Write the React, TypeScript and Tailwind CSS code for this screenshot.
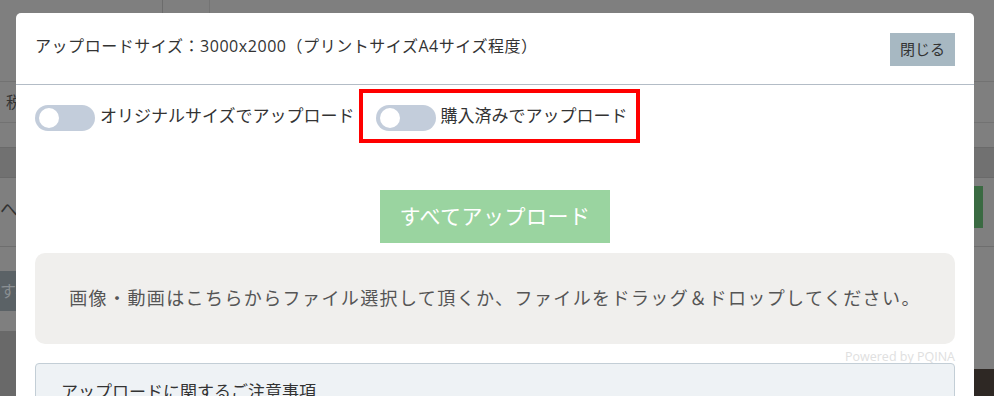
import React from "react";

function Toggle() {
  return (
    <span className="relative inline-block w-[60px] h-[26px] mt-[4px] rounded-full bg-[#c3cddb] shrink-0">
      <span className="absolute left-[4px] top-[3px] w-[20px] h-[20px] rounded-full bg-white" />
    </span>
  );
}

export default function App() {
  const font = { fontFamily: '"Open Sans", "Noto Sans CJK JP", sans-serif' };
  return (
    <div className="relative w-[994px] h-[396px] overflow-hidden bg-[#7f7f7f]" style={font}>
      {/* background page (dimmed) */}
      <div className="flex flex-col w-full h-full">
        <div className="flex h-[13px] shrink-0">
          <div className="w-[163px] border-r border-[#6c6c6c]" />
          <div className="w-[47px] border-r border-[#747474]" />
        </div>
        <div className="h-[69px] shrink-0 border-b border-[#727272]" />
        <div className="h-[41px] shrink-0 border-b border-[#727272] flex items-center pl-[6px] text-[16px] text-[#333]">税</div>
        <div className="h-[24px] shrink-0" />
        <div className="h-[31px] shrink-0 bg-[#717171] border-y border-[#6a6a6a]" />
        <div className="h-[69px] shrink-0 border-b border-[#6e6e6e] flex items-center justify-between">
          <span className="text-[18px] text-[#333] pb-[6px]">へ</span>
          <span className="w-[9px] h-[42px] mr-[11px] mb-[10px] bg-[#3a6a42]" />
        </div>
        <div className="h-[24px] shrink-0" />
        <div className="h-[40px] shrink-0 flex">
          <div className="w-[20px] bg-[#5b6266] text-[16px] text-[#8a8f92] leading-[40px] overflow-hidden whitespace-nowrap">すべ</div>
        </div>
        <div className="h-[20px] shrink-0" />
        <div className="flex-1 flex justify-between">
          <div className="w-[20px] bg-[#696969]" />
          <div className="w-[20px] mt-[38px] bg-[#2e2824]" />
        </div>
      </div>

      {/* modal */}
      <div className="absolute left-[16px] top-[13px] w-[958px] bg-white rounded-[5px] flex flex-col">
        <div className="flex items-center justify-between h-[72px] shrink-0 pl-[19px] pr-[19px] pt-[1px] border-b border-[#b3bcc6]">
          <span className="text-[16px] tracking-[0.55px] text-[#333] pb-[6px]">アップロードサイズ：3000x2000（プリントサイズA4サイズ程度）</span>
          <button className="w-[65px] h-[33px] bg-[#a7b8c2] text-[15px] text-[#333]">閉じる</button>
        </div>
        <div className="flex items-center pl-[19px] pt-[3px] h-[58px] shrink-0">
          <label className="flex items-center gap-[5px] text-[17px] text-[#333]">
            <Toggle />
            <span>オリジナルサイズでアップロード</span>
          </label>
          <div className="ml-[4px] flex items-center gap-[5px] h-[54px] w-[281px] pl-[13px] border-[4px] border-[#ff0000] text-[17px] text-[#333]">
            <Toggle />
            <span>購入済みでアップロード</span>
          </div>
        </div>
        <div className="flex justify-center pt-[47px] shrink-0">
          <button className="w-[230px] h-[53px] bg-[#9ad4a0] text-white text-[21px] tracking-[0.5px]">すべてアップロード</button>
        </div>
        <div className="mx-[19px] mt-[10px] h-[91px] shrink-0 rounded-[10px] bg-[#f0efed] flex items-center justify-center text-[18px] tracking-[1.4px] text-[#555]">
          画像・動画はこちらからファイル選択して頂くか、ファイルをドラッグ＆ドロップしてください。
        </div>
        <div className="mx-[19px] h-[19px] shrink-0 text-right text-[12.5px] leading-[26px] text-[#e0e0e0]">Powered by PQINA</div>
        <div className="mx-[19px] h-[60px] shrink-0 rounded-t-[4px] border border-[#c3ced6] bg-[#eef2f5] pl-[25px] pt-[15px] text-[17px] text-[#333]">
          アップロードに関するご注意事項
        </div>
      </div>
    </div>
  );
}
